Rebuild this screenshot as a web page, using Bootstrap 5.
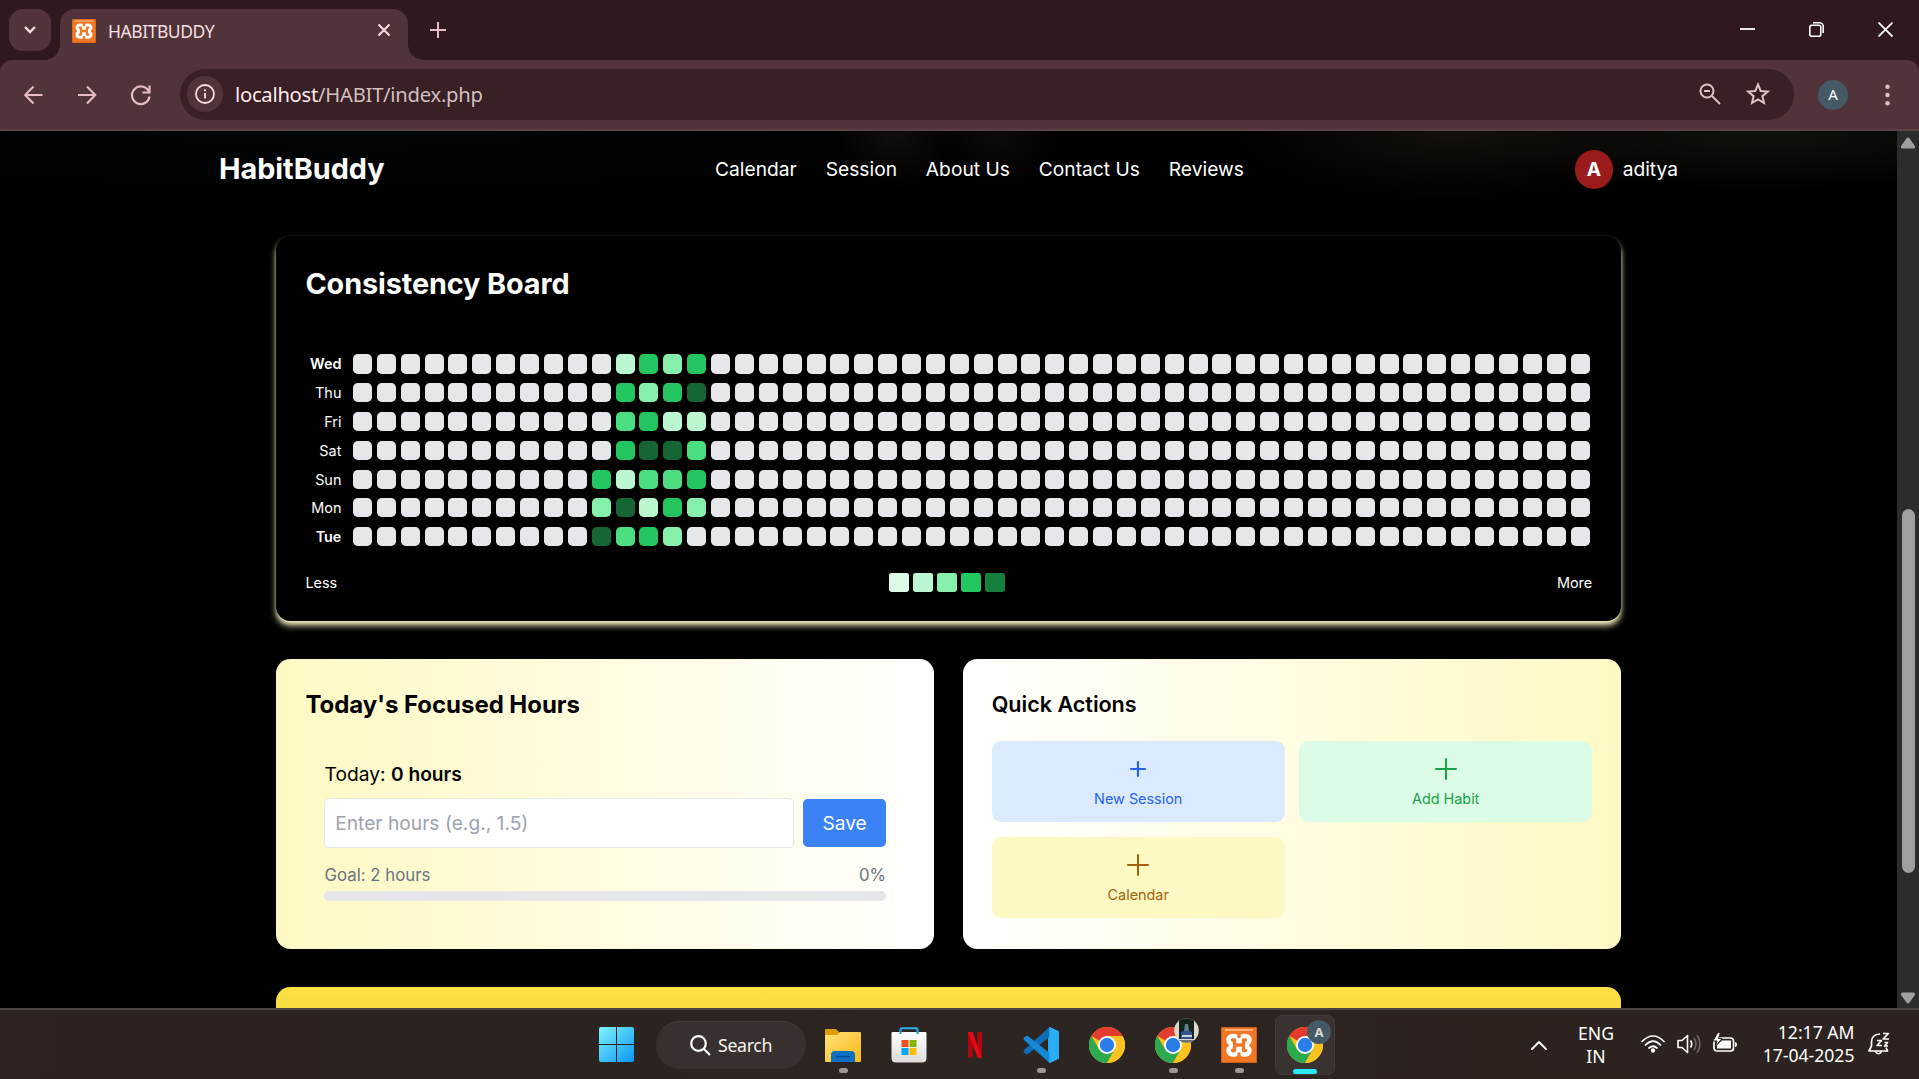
<!DOCTYPE html>
<html lang="en">
<head>
<meta charset="utf-8">
<title>HABITBUDDY</title>
<link href="https://cdn.jsdelivr.net/npm/bootstrap@5.3.0/dist/css/bootstrap.min.css" rel="stylesheet">
<style>
html,body{height:100%;overflow:hidden}
body{background:#000;font-family:Inter,"Liberation Sans",sans-serif;font-size:19.2px;line-height:28.8px;color:#fff}
svg{display:block;flex:none}
.sys{font-family:"Noto Sans","Open Sans",sans-serif}
/* window frame */
.tabstrip{height:60px;background:#2f191e;padding-left:9px;padding-top:9px}
.tab-menu{width:42px;height:42px;border-radius:14px;background:#513439}
.browser-tab{width:348px;height:51px;margin-left:9px;border-radius:15px 15px 0 0;background:#513439;position:relative;padding:0 17px 0 12px;color:#f6dfe2;font-size:17.5px;letter-spacing:-.45px}
.browser-tab::before,.browser-tab::after{content:"";position:absolute;bottom:0;width:15px;height:15px}
.browser-tab::before{left:-15px;background:radial-gradient(circle at 0 0,transparent 14.5px,#513439 15px)}
.browser-tab::after{right:-15px;background:radial-gradient(circle at 100% 0,transparent 14.5px,#513439 15px)}
.tab-title{margin-left:12px;line-height:34px;padding-bottom:8px}
.toolbar-wrap{background:#2f191e;height:71px}
.toolbar-row{height:71px;background:#513439;border-radius:12px 12px 0 0;border-bottom:2px solid #5b4246;padding:0 21px 0 21px}
.address{height:51px;width:1614px;border-radius:26px;background:#382024;margin-left:27px;padding:0 24px 0 7px;color:#d3bfc2;font-size:20.2px;letter-spacing:-.25px;margin-top:-1px}
.address b{font-weight:400;color:#ffe9ec}
.info-dot{width:36px;height:36px;border-radius:50%;background:#513439}
.me-dot{width:30px;height:30px;border-radius:50%;background:#455a64;color:#fff;font-size:15px}
/* page */
.viewport{height:877px}
.page-area{overflow:hidden;background:radial-gradient(ellipse 60px 60px at 895px 0,rgba(40,30,22,.45),transparent),radial-gradient(ellipse 60px 60px at 1000px 0,rgba(30,26,18,.45),transparent),radial-gradient(ellipse 220px 70px at 1450px 0,rgba(34,26,18,.6),transparent),radial-gradient(ellipse 300px 60px at 1760px 0,rgba(22,22,15,.8),transparent),radial-gradient(ellipse 700px 60px at 350px 0,rgba(2,7,9,.9),transparent),#000}
.site-nav{height:77px;width:1459px}
.brand-name{font-size:28.8px;font-weight:700;width:496px;letter-spacing:-.02px}
.site-links{gap:28.8px;letter-spacing:.02px}
.avatar-dot{width:38.4px;height:38.4px;border-radius:50%;background:#991b1b;font-weight:700}
.site-body{width:1345px}
.board{height:385px;margin-top:28px;border-radius:14.4px;background:#000;padding:28.8px 28.8px 28.8px 29.4px;box-shadow:0 4.8px 7.2px -1.2px #fef9c3,0 2.4px 4.8px -2.4px #fef9c3}
.board h2{font-size:28.8px;font-weight:700;line-height:38.4px;margin:0;letter-spacing:-.1px}
.heat{margin-top:51.2px;height:192px}
.heat-line{height:19.2px;margin-bottom:9.6px}
.day-name{width:36px;margin-right:11.5px;text-align:right;font-size:14.4px;line-height:19.2px}
.cells{width:1236.6px;gap:4.8px}
.cells i{flex:1 1 0;height:19.2px;border-radius:4.8px;background:#e5e7eb}
.cells .a{background:#bbf7d0}.cells .b{background:#86efac}.cells .c{background:#4ade80}.cells .d{background:#22c55e}.cells .e{background:#166534}
.legend-line{font-size:14.4px;line-height:19.2px;margin-top:26.8px}
.legend-line i{width:19.2px;height:19.2px;border-radius:2.4px}
.tile-row{margin-top:38px;gap:28.8px;height:290px}
.panel{border-radius:14.4px;padding:28.8px;color:#000}
.panel-l{background:linear-gradient(to right,#fef9c3,#fff)}
.panel-r{background:linear-gradient(to right,#fff,#fef9c3)}
.panel-l h3{font-size:24px;font-weight:700;line-height:33.6px;margin:0 0 0 .6px;letter-spacing:-.05px}
.panel-r h3{font-size:21.6px;font-weight:600;line-height:33.6px;margin:0;letter-spacing:-.03px}
.hours-box{margin:38.6px 19.2px 0}
.hours-box>div:first-child{padding-left:.6px}
.hours-in{height:50px;border:1px solid #e5e7eb;border-radius:4.8px;background:#fff;color:#9ca3af;padding:2px 9.6px 0 10.2px;margin-right:9px}
.save-btn{width:83px;height:48px;border-radius:4.8px;background:#3b82f6;color:#fff;font-size:19.2px;padding:2px 0 0;border:0}
.goal-line{font-size:16.8px;line-height:24px;margin-top:15px;padding-left:.6px;color:#6b7280}
.goal-bar{height:10px;border-radius:5px;background:#e5e7eb;margin-top:4px}
.actions{display:grid;grid-template-columns:1fr 1fr;gap:15px 14.4px;margin-top:20px}
.act{height:81px;border-radius:9.6px;font-size:14.4px;line-height:19.2px;padding-top:16px}
.act svg{margin-bottom:8px}
.act-s{background:#dbeafe;color:#2563eb}.act-h{background:#dcfce7;color:#16a34a}.act-c{background:#fef9c3;color:#a16207}
.gold{margin-top:38px;height:60px;border-radius:14.4px;background:linear-gradient(#fde047,#f7d438)}
.scroll-rail{width:22px;background:#2c2c2c;padding:6px 0 4px}
.thumb{width:13px;height:364px;border-radius:6.5px;background:#9f9f9f;margin-top:360px}
/* taskbar */
.taskbar{height:71px;border-top:2px solid #4a4442;background:linear-gradient(90deg,#2d2320,#2b2421 40%,#2d2521 55%,#2c221f)}
.slot{height:69px;position:relative}
.run-dot::after{content:"";position:absolute;left:50%;bottom:6px;width:9px;height:5px;margin-left:-4.5px;border-radius:3px;background:#9d9997}
.search-pill{width:150px;height:48px;border-radius:24px;background:#38302e;border-top:1px solid #453d3a;font-size:17.8px;letter-spacing:-.35px;padding-left:34px;margin-left:22px;color:#f4f2f1}
.active-app{width:60px;height:60px;border-radius:7px;background:#3a3230;border:1px solid #433b39;position:relative}
.active-app::after{content:"";position:absolute;left:17px;bottom:0;width:24px;height:5px;border-radius:3px;background:#27e9f9}
.acct{position:absolute;width:24px;height:24px;border-radius:50%;background:#455a64;color:#d5dadd;font-size:13px;font-weight:700;line-height:24px;text-align:center;left:31px;top:4px}
.photo{position:absolute;left:19px;top:8px}
.tray{font-size:17.6px;line-height:23px}
.app-left{width:599px}
</style>
</head>
<body class="d-flex flex-column">
<svg width="0" height="0" class="position-absolute" aria-hidden="true">
<defs>
<linearGradient id="gw" x1="0" y1="0" x2="1" y2="1"><stop offset="0" stop-color="#7df3ff"/><stop offset="1" stop-color="#0a97f5"/></linearGradient>
<linearGradient id="gf" x1="0" y1="0" x2="1" y2="1"><stop offset="0" stop-color="#ffe07a"/><stop offset="1" stop-color="#fbb917"/></linearGradient>
<linearGradient id="gs" x1="0" y1="0" x2="0" y2="1"><stop offset="0" stop-color="#fff"/><stop offset="1" stop-color="#dcdcdc"/></linearGradient>
<symbol id="xampp" viewBox="0 0 36 36"><rect width="36" height="36" rx="2.500" fill="#f37623"/><path d="M.5.500h35v35H.5z" fill="none" stroke="#c9631c"/><path d="M4 3h28" stroke="#fbc193" stroke-width="1.600"/>
<g fill="none" stroke-linecap="round" stroke-linejoin="round"><path d="M11.500 13H13.500V23.500H11.500M24.500 13H22.500V23.500H24.500M13.500 18.200H22.500" stroke="#fff" stroke-width="12.500"/><path d="M11.500 13H13.500V16.500Q13.500 18 15 18H21Q22.500 18 22.500 19.500V23.500H24.500M24.500 13H22.500V16.500Q22.500 18 21 18H15Q13.500 18 13.500 19.500V23.500H11.500" stroke="#f37623" stroke-width="3.400"/><path d="M18 5.500V9.500M18 27V31" stroke="#f37623" stroke-width="3.400"/><path d="M5 18.200H6.500M29.500 18.200H31" stroke="#f37623" stroke-width="2.600"/></g></symbol>
<symbol id="chrome" viewBox="0 0 36 36"><circle cx="18" cy="18" r="18" fill="#fcc31e"/><path d="M18 18 2.400 9A18 18 0 0 1 33.600 9Z" fill="#e33b2e"/><path d="M2.400 9A18 18 0 0 0 18 36L25.800 22.500 18 18 10.200 22.500Z" fill="#2da94f"/><path d="M18 9H33.600A18 18 0 0 1 18 36L25.800 22.500Z" fill="#fcc31e"/><circle cx="18" cy="18" r="9" fill="#fff"/><circle cx="18" cy="18" r="7.200" fill="#2b7de9"/></symbol>
</defs></svg>

<header>
<div class="tabstrip d-flex">
  <div class="tab-menu d-flex align-items-center justify-content-center"><svg width="14" height="10" viewBox="0 0 14 10" fill="none" stroke="#f6dfe2" stroke-width="2.400"><path d="M2 2l5 5 5-5"/></svg></div>
  <div class="browser-tab d-flex align-items-center sys">
    <svg width="24" height="24" class="mb-2"><use href="#xampp"/></svg>
    <span class="tab-title">HABITBUDDY</span>
    <svg class="ms-auto" width="14" height="14" viewBox="0 0 14 14" stroke="#f6dfe2" stroke-width="2" style="margin-bottom:9px"><path d="M1.500 1.500l11 11M12.500 1.500l-11 11"/></svg>
  </div>
  <svg width="16" height="16" viewBox="0 0 16 16" stroke="#e8bcc3" stroke-width="2" style="margin:13px 0 0 22px"><path d="M8 0v16M0 8h16"/></svg>
  <div class="d-flex ms-auto" style="gap:54px;padding:13px 26px 0 0">
    <svg width="15" height="15" stroke="#fff" stroke-width="1.800"><path d="M0 7h15"/></svg>
    <svg width="15" height="15" fill="none" stroke="#fff" stroke-width="1.600"><rect x=".8" y="3.200" width="11" height="11" rx="2"/><path d="M4 .8h6.500a3.700 3.700 0 0 1 3.700 3.700V11"/></svg>
    <svg width="15" height="15" stroke="#fff" stroke-width="1.800"><path d="M.5.5l14 14M14.500.5l-14 14"/></svg>
  </div>
</div>
<div class="toolbar-wrap">
<div class="toolbar-row d-flex align-items-center">
  <svg width="24" height="24" viewBox="0 0 24 24" fill="none" stroke="#e8bcc3" stroke-width="2"><path d="M21.500 12H4.500M12.500 3.500 4.200 12l8.300 8.500"/></svg>
  <svg width="24" height="24" viewBox="0 0 24 24" fill="none" stroke="#e8bcc3" stroke-width="2" style="margin-left:30px"><path d="M3 12h17M12 3.500l8.300 8.500-8.300 8.500"/></svg>
  <svg width="24" height="24" viewBox="0 0 24 24" fill="none" stroke="#e8bcc3" stroke-width="2.200" style="margin-left:30px"><path d="M19.500 8A8.800 8.800 0 1 0 20.500 13.500M20.500 2.500v7h-7"/></svg>
  <div class="address d-flex align-items-center sys">
    <div class="info-dot d-flex align-items-center justify-content-center"><svg width="20" height="20" fill="none" stroke="#f6dfe2" stroke-width="1.800"><circle cx="10" cy="10" r="9"/><path d="M10 9v5.500M10 5.200v2"/></svg></div>
    <span class="flex-grow-1" style="margin-left:12px"><b>localhost</b>/HABIT/index.php</span>
    <svg width="22" height="22" fill="none" stroke="#dcc3c6" stroke-width="2"><circle cx="8" cy="8" r="6.500"/><path d="M13 13l8 8M5 8h6"/></svg>
    <svg width="24" height="24" viewBox="0 0 24 24" fill="none" stroke="#dcc3c6" stroke-width="2" style="margin-left:25px"><path d="M12 2.500l2.700 6.500 7 .600-5.300 4.600 1.600 6.800L12 17.400l-6 3.600L7.600 14.200 2.300 9.600l7-.6z"/></svg>
  </div>
  <div class="me-dot d-flex align-items-center justify-content-center sys" style="margin-left:24px">A</div>
  <svg width="5" height="22" fill="#e8bcc3" style="margin-left:36.500px"><circle cx="2.500" cy="2.700" r="2.200"/><circle cx="2.500" cy="11" r="2.200"/><circle cx="2.500" cy="19.300" r="2.200"/></svg>
</div></div>
</header>

<div class="viewport d-flex flex-shrink-0">
<main class="page-area flex-grow-1">
  <nav class="site-nav mx-auto d-flex align-items-center">
    <span class="brand-name">HabitBuddy</span>
    <div class="site-links d-flex"><span>Calendar</span><span>Session</span><span>About Us</span><span>Contact Us</span><span>Reviews</span></div>
    <div class="ms-auto d-flex align-items-center" style="gap:9.6px"><span class="avatar-dot d-flex align-items-center justify-content-center">A</span><span>aditya</span></div>
  </nav>
  <div class="site-body mx-auto">
    <section class="board">
      <h2>Consistency Board</h2>
      <div class="heat" id="heat"></div>
      <div class="legend-line d-flex justify-content-between align-items-center">
        <span>Less</span>
        <div class="d-flex" style="gap:4.8px"><i style="background:#dcfce7"></i><i style="background:#bbf7d0"></i><i style="background:#86efac"></i><i style="background:#22c55e"></i><i style="background:#15803d"></i></div>
        <span>More</span>
      </div>
    </section>
    <div class="tile-row d-flex">
      <section class="panel panel-l flex-fill w-50">
        <h3>Today's Focused Hours</h3>
        <div class="hours-box">
          <div>Today: <span class="fw-semibold">0 hours</span></div>
          <div class="d-flex align-items-center" style="margin-top:9px">
            <div class="hours-in flex-grow-1 d-flex align-items-center">Enter hours (e.g., 1.5)</div>
            <button class="btn save-btn" type="button">Save</button>
          </div>
          <div class="goal-line d-flex justify-content-between"><span>Goal: 2 hours</span><span>0%</span></div>
          <div class="goal-bar"></div>
        </div>
      </section>
      <section class="panel panel-r flex-fill w-50">
        <h3>Quick Actions</h3>
        <div class="actions">
          <div class="act act-s d-flex flex-column align-items-center"><svg width="24" height="24" stroke="currentColor" stroke-width="2.200" stroke-linecap="round"><path d="M12 5v14M5 12h14"/></svg>New Session</div>
          <div class="act act-h d-flex flex-column align-items-center"><svg width="24" height="24" stroke="currentColor" stroke-width="2" stroke-linecap="round"><path d="M12 2v20M2 12h20"/></svg>Add Habit</div>
          <div class="act act-c d-flex flex-column align-items-center"><svg width="24" height="24" stroke="currentColor" stroke-width="2" stroke-linecap="round"><path d="M12 2v20M2 12h20"/></svg>Calendar</div>
        </div>
      </section>
    </div>
    <section class="gold"></section>
  </div>
</main>
<aside class="scroll-rail d-flex flex-column align-items-center">
  <svg width="16" height="12" fill="#9f9f9f"><path d="M6.500 1.500Q8-.500 9.500 1.500L15 9Q15.500 11.500 13.500 11.500H2.500Q.5 11.500 1 9Z"/></svg>
  <div class="thumb"></div>
  <svg class="mt-auto" width="16" height="12" fill="#9f9f9f"><path d="M6.500 10.500Q8 12.500 9.500 10.500L15 3Q15.500.5 13.500.5H2.500Q.5.500 1 3Z"/></svg>
</aside>
</div>

<footer class="taskbar d-flex align-items-center sys flex-shrink-0">
  <div class="app-left"></div>
  <svg width="35" height="35" fill="url(#gw)"><path d="M2 0H17V17H0V2Q0 0 2 0ZM18 0H33Q35 0 35 2V17H18ZM0 18H17V35H2Q0 35 0 33ZM18 18H35V33Q35 35 33 35H18Z"/></svg>
  <div class="search-pill d-flex align-items-center"><svg width="21" height="21" fill="none" stroke="#fff" stroke-width="2.200" style="margin-right:7px"><circle cx="8.500" cy="8.500" r="7.300"/><path d="M13.500 13.500l6.500 6.500"/></svg>Search</div>
  <div class="slot run-dot d-flex align-items-center" style="margin-left:19px"><svg width="36" height="36" viewBox="0 0 36 36"><path d="M0 3Q0 2 1 2H11L15 6H24V12H0Z" fill="#e09d08"/><path d="M0 8H12L15 5H35Q36 5 36 6V34Q36 35 35 35H1Q0 35 0 34Z" fill="url(#gf)"/><path d="M6 35V28Q6 24 10 24H26Q30 24 30 28V35Z" fill="#1170c4"/><path d="M11 29.500H25" stroke="#0a4a8c" stroke-width="1.500"/></svg></div>
  <div class="slot d-flex align-items-center" style="margin-left:29.500px"><svg width="36" height="36" viewBox="0 0 36 36"><path d="M9.500 8V2.500Q9.500 1.200 10.500 1.200H25.500Q26.500 1.200 26.500 2.500V8" fill="none" stroke="#29b2ef" stroke-width="2"/><path d="M1.500 5H34.500Q35.500 5 35.500 6V31Q35.500 35.500 31 35.500H5Q.5 35.500.5 31V6Q.5 5 1.500 5Z" fill="url(#gs)"/><path d="M9.500 7V2.500M26.500 7V2.500" stroke="#1b8fd0" stroke-width="2"/><path d="M10.500 13h7v7h-7z" fill="#f25022"/><path d="M18.500 13h7v7h-7z" fill="#7fba00"/><path d="M10.500 21h7v7h-7z" fill="#00a4ef"/><path d="M18.500 21h7v7h-7z" fill="#ffb900"/></svg></div>
  <div class="slot d-flex align-items-center" style="margin-left:41.500px"><svg width="14" height="26" viewBox="0 0 14 26"><path d="M0 0H4.600V25.500L0 26ZM9.400 0H14V26L9.400 25.500Z" fill="#b1060f"/><path d="M0 0H4.600L14 26 9.400 25.500Z" fill="#e50914"/></svg></div>
  <div class="slot run-dot d-flex align-items-center" style="margin-left:41px"><svg width="36" height="36" viewBox="0 0 36 36"><path d="M26.500 0 36 4.500V31.500L26.500 36 25 33V3Z" fill="#29a7f2"/><path d="M26.500 0 1 23Q0 24 1 25.200L3 27Q4 27.600 5 27L26.500 10Z" fill="#0b6fb8"/><path d="M26.500 36 1 13Q0 12 1 10.800L3 9Q4 8.400 5 9L26.500 26Z" fill="#1389d6"/><path d="M26.500 0V36L36 31.500V4.500Z" fill="#2badf6"/></svg></div>
  <div class="slot d-flex align-items-center" style="margin-left:30px"><svg width="36" height="36"><use href="#chrome"/></svg></div>
  <div class="slot run-dot d-flex align-items-center" style="margin-left:30px"><svg width="36" height="36"><use href="#chrome"/></svg>
    <svg class="photo" width="25" height="25" viewBox="0 0 25 25"><clipPath id="cp"><circle cx="12.500" cy="12.500" r="12.300"/></clipPath><g clip-path="url(#cp)"><path d="M0 0h25v25H0z" fill="#dcd9cc"/><path d="M5 0h15v21H5z" fill="#14231d"/><path d="M11 6h3l1 7h-5z" fill="#637c8e"/><path d="M7 14q5.500-3 11 0v7H7z" fill="#31558c"/><path d="M8 17h10v2H8z" fill="#c9d3dc"/><path d="M5 22h16v3H5z" fill="#6d7573"/></g></svg></div>
  <div class="slot run-dot d-flex align-items-center" style="margin-left:30px"><svg width="36" height="36"><use href="#xampp"/></svg></div>
  <div class="active-app d-flex align-items-center justify-content-center" style="margin-left:18px"><svg width="36" height="36"><use href="#chrome"/></svg><span class="acct">A</span></div>
  <div class="tray d-flex align-items-center ms-auto" style="padding-right:29px">
    <svg width="16" height="10" fill="none" stroke="#fff" stroke-width="1.900" stroke-linecap="round" stroke-linejoin="round"><path d="M1 9l7-7 7 7"/></svg>
    <div class="text-center" style="width:36px;margin-left:31px">ENG<br>IN</div>
    <svg width="24" height="18" viewBox="0 0 24 18" fill="none" stroke="#fff" stroke-width="1.700" stroke-linecap="round" style="margin-left:27px;margin-bottom:2px"><path d="M1 6.500Q12-4.500 23 6.500M4.500 10Q12 2.500 19.500 10M8 13Q12 9.500 16 13"/><circle cx="12" cy="15.500" r="1.300" fill="#fff"/></svg>
    <svg width="24" height="20" viewBox="0 0 24 20" fill="none" stroke="#fff" stroke-width="1.600" stroke-linejoin="round" style="margin-left:12px;margin-bottom:2px"><path d="M1 6.500H5L10.500 1.500V18.500L5 13.500H1Z"/><path d="M13.500 6.500Q16 10 13.500 13.500"/><path d="M17 4Q21 10 17 16M20 1Q26 10 20 19" stroke="#6e6764"/></svg>
    <svg width="24" height="20" viewBox="0 0 24 20" style="margin-left:12px;margin-bottom:3px"><rect x="1" y="5" width="19.500" height="13" rx="3" fill="none" stroke="#fff" stroke-width="1.700"/><path d="M22 9v5q2 0 2-2.500T22 9" fill="#fff"/><path d="M9 7.500H18V15.500H4V12Z" fill="#fff"/><path d="M5-1 0 8H4L2.500 13.500 9 5.500H5.500L7.500-1Z" fill="#fff" stroke="#2c231f" stroke-width="1"/></svg>
    <div class="text-end" style="width:100px;margin-left:17.500px;margin-top:-2px;white-space:nowrap"><span>12:17 AM</span><br>17-04-2025</div>
    <svg width="22" height="24" viewBox="0 0 22 24" fill="none" stroke="#fff" stroke-width="1.700" stroke-linejoin="round" style="margin-left:13.500px;margin-bottom:2px"><path d="M12 2Q3.500 2.500 3.500 10V14L1 19H19.500L18 15.500M7.500 19.500Q10.500 24 13.500 19.500"/><path d="M15 1.500h5.500L15 7h6M9 8.500h4.500L9 13.500h5M16.500 10.500h3L16.500 14h3.500" stroke-width="1.600"/></svg>
  </div>
</footer>
<script>
// level letters per column; "." is an empty day
const days=[["Wed",".adbd"],["Thu",".dbde"],["Fri",".cdaa"],["Sat",".deec"],["Sun","daccd"],["Mon","beadb"],["Tue","ecdb."]];
document.getElementById("heat").innerHTML=days.map(([n,p],r)=>{
  const s=".".repeat(10)+p+".".repeat(37);
  return `<div class="heat-line d-flex"><span class="day-name${r%6?"":" fw-semibold"}">${n}</span><div class="cells d-flex">${[...s].map(c=>`<i class="${c==="."?"":c}"></i>`).join("")}</div></div>`;
}).join("");
</script>
<script src="https://cdn.jsdelivr.net/npm/bootstrap@5.3.0/dist/js/bootstrap.bundle.min.js"></script>
</body>
</html>
